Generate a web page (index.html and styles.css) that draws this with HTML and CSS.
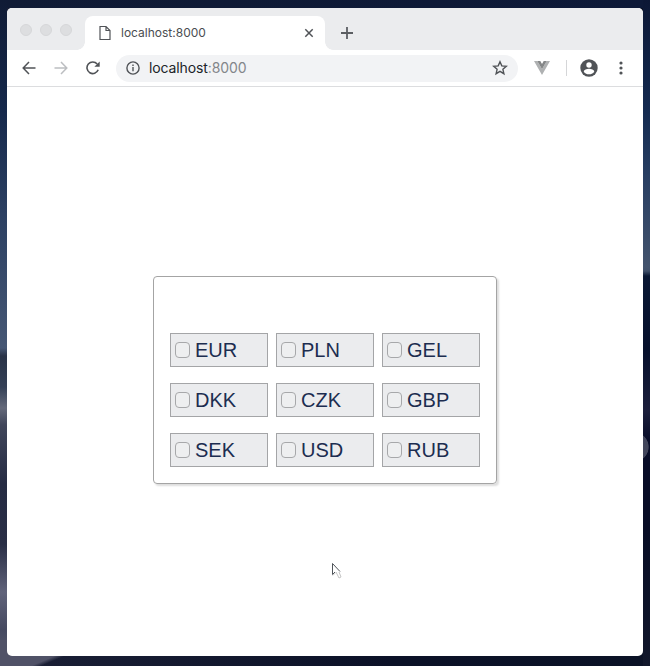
FILE: index.html
```html
<!DOCTYPE html>
<html lang="en">
<head>
<meta charset="utf-8">
<title>localhost:8000</title>
<link rel="stylesheet" href="styles.css">
</head>
<body>
<div class="window">
  <header class="tabstrip">
    <div class="lights"><i></i><i></i><i></i></div>
    <div class="tab">
      <svg class="file" width="12" height="16" viewBox="0 0 12 16" fill="none" stroke="#505357" stroke-width="1.2"><path d="M1 1.500h6l4 4v9H1zM7 1.500v4h4"/></svg>
      <span class="tab-title">localhost:8000</span>
      <svg class="close" width="10" height="10" viewBox="0 0 10 10" stroke="#505357" stroke-width="1.5"><path d="M1.300 1.300l7.400 7.400M8.700 1.300L1.300 8.700"/></svg>
    </div>
    <svg class="plus" width="14" height="14" viewBox="0 0 14 14" stroke="#5b5e62" stroke-width="1.8"><path d="M7 1v12M1 7h12"/></svg>
  </header>
  <nav class="toolbar">
    <svg class="back" width="14" height="14" viewBox="0 0 14 14" fill="none" stroke="#505357" stroke-width="1.5"><path d="M13.500 7H1.500M7 1L1.200 7 7 13"/></svg>
    <svg class="forward" width="14" height="14" viewBox="0 0 14 14" fill="none" stroke="#bcbec1" stroke-width="1.5"><path d="M.5 7h12M7 1l5.800 6L7 13"/></svg>
    <svg class="reload" width="14" height="14" viewBox="0 0 14 14"><path d="M12.200 8.800A5.800 5.800 0 1 1 11.200 3" fill="none" stroke="#505357" stroke-width="1.6"/><path d="M13.700.5v5.300H8.400z" fill="#505357"/></svg>
    <div class="address">
      <svg width="14" height="14" viewBox="0 0 14 14"><circle cx="7" cy="7" r="6.1" fill="none" stroke="#505357" stroke-width="1.4"/><path d="M6.300 6h1.400v4.300H6.300zM6.300 3.500h1.400v1.400H6.300z" fill="#505357"/></svg>
      <span class="url">localhost<span class="port">:8000</span></span>
      <svg class="star" width="16" height="16" viewBox="0 0 16 16" fill="none" stroke="#505357" stroke-width="1.4"><path d="M8 1.800l1.800 4.100 4.500.4-3.400 3 1 4.400L8 11.400l-3.900 2.300 1-4.400-3.400-3 4.500-.4z"/></svg>
    </div>
    <svg class="vue" width="16" height="14" viewBox="0 0 16 14"><path d="M0 0h3.300L8 8.200 12.700 0H16L8 14z" fill="#afb1b2"/><path d="M3.300 0h3L8 3l1.700-3h3L8 8.200z" fill="#858788"/></svg>
    <i class="divider"></i>
    <svg class="profile" width="18" height="18" viewBox="0 0 18 18"><circle cx="9" cy="9" r="8.700" fill="#505357"/><circle cx="9" cy="6" r="2.700" fill="#fff"/><path d="M3.700 12.200c.8-3.400 9.800-3.400 10.600 0C12.900 16.400 5.100 16.400 3.700 12.200z" fill="#fff"/></svg>
    <svg class="menu" width="4" height="14" viewBox="0 0 4 14" fill="#505357"><circle cx="2" cy="2" r="1.600"/><circle cx="2" cy="7" r="1.600"/><circle cx="2" cy="12" r="1.600"/></svg>
  </nav>
  <main class="page">
    <div class="card">
      <label class="currency"><input type="checkbox">EUR</label>
      <label class="currency"><input type="checkbox">PLN</label>
      <label class="currency"><input type="checkbox">GEL</label>
      <label class="currency"><input type="checkbox">DKK</label>
      <label class="currency"><input type="checkbox">CZK</label>
      <label class="currency"><input type="checkbox">GBP</label>
      <label class="currency"><input type="checkbox">SEK</label>
      <label class="currency"><input type="checkbox">USD</label>
      <label class="currency"><input type="checkbox">RUB</label>
    </div>
  </main>
</div>
<svg class="cursor" width="12" height="18" viewBox="0 0 12 18"><path d="M5 10l3 6 2-1-2-5" fill="#fff" stroke="#c4c4c4"/><path d="M1.500 1.500v11l2.500-2.500h4.500z" fill="#fff"/><path d="M4 10l-2.500 2.500v-11L9 9.500" fill="none" stroke="#50555b"/><path d="M1.500 13.500L4.500 11" stroke="#d0d0d0"/></svg>
</body>
</html>
```
FILE: styles.css
```css
* { box-sizing: border-box; }

body {
  margin: 0;
  height: 666px;
  padding: 8px 7px 10px;
  overflow: hidden;
  font-family: "Liberation Sans", Arial, sans-serif;
  background:
    radial-gradient(circle 15px at 634px 447px, #42465c 95%, transparent),
    linear-gradient(157deg, #505267 36px, transparent 40px) 0 100% / 75px 26px no-repeat,
    linear-gradient(#101b35, #15284b 110px, #2d4163 219px, #465774 348px, #293347 356px, #344056 387px, #64697a 408px, #40465a 425px, #252b43 484px, #292e45 544px, #60637a 592px, #454960 630px, #55576b 656px) 0 0 / 7px 656px no-repeat,
    linear-gradient(#0c1735, #142a50 110px, #283e62 176px, #43536d 267px, #40506a 271px, #0a1834 276px, #06102c 349px, #1c1f3c 410px, #080d29 440px, #080d25 530px, #11172b 666px) 100% 0 / 7px 100% no-repeat,
    linear-gradient(90deg, #101b35, #0d1938) 0 0 / 100% 8px no-repeat,
    linear-gradient(90deg, #1b2036, #0b1127 60%, #0b1226);
}

.window {
  height: 648px;
  display: flex;
  flex-direction: column;
  overflow: hidden;
  border-radius: 5px;
  background: #fff;
}

.tabstrip {
  height: 42px;
  flex: none;
  display: flex;
  align-items: center;
  background: #ebecee;
}

.lights {
  display: flex;
  gap: 8px;
  width: 78px;
  padding: 2px 0 0 13px;
}

.lights i {
  width: 12px;
  height: 12px;
  border: 1px solid #d6d7d9;
  border-radius: 50%;
  background: #dddee0;
}

.tab {
  position: relative;
  align-self: flex-end;
  width: 240px;
  height: 34px;
  padding: 0 11px 0 14px;
  display: flex;
  align-items: center;
  border-radius: 8px 8px 0 0;
  background: #fff;
}

.tab::before,
.tab::after {
  content: "";
  position: absolute;
  bottom: 0;
  width: 8px;
  height: 8px;
}

.tab::before {
  left: -8px;
  background: radial-gradient(circle at 0 0, transparent 7.5px, #fff 8px);
}

.tab::after {
  right: -8px;
  background: radial-gradient(circle at 100% 0, transparent 7.5px, #fff 8px);
}

.tab-title {
  margin-left: 10px;
  font: 12px/16px Inter, sans-serif;
  color: #4a4d51;
}

.close { margin-left: auto; }

.plus { margin: 8px 0 0 15px; }

.toolbar {
  height: 37px;
  flex: none;
  display: flex;
  align-items: center;
  padding-left: 15px;
  border-bottom: 1px solid #dcdddf;
}

.forward,
.reload { margin-left: 18px; }

.address {
  width: 402px;
  height: 27px;
  margin-left: 16px;
  padding: 0 10px;
  display: flex;
  align-items: center;
  border-radius: 14px;
  background: #f2f3f5;
}

.url {
  margin-left: 9px;
  font: 14px/18px Inter, sans-serif;
  letter-spacing: -0.12px;
  color: #202328;
}

.port { color: #83868a; }

.star { margin-left: auto; }

.vue { margin-left: 16px; }

.divider {
  width: 1px;
  height: 16px;
  margin-left: 16px;
  background: #d5d6d8;
}

.profile { margin-left: 13px; }

.menu { margin-left: 21px; }

.page {
  flex: 1;
  display: flex;
  justify-content: center;
  align-items: flex-start;
  padding-top: 189px;
}

.card {
  width: 344px;
  height: 208px;
  padding: 56px 16px 16px;
  display: grid;
  grid-template-columns: repeat(3, 98px);
  grid-auto-rows: 34px;
  gap: 16px 8px;
  border: 1px solid #a4a4a4;
  border-radius: 4px;
  box-shadow: 2px 2px 2px #dedede;
}

.currency {
  display: flex;
  align-items: center;
  padding-left: 4px;
  border: 1px solid #a4a5a7;
  background: #ebecee;
  color: #1c2d50;
  font-size: 20px;
}

.currency input {
  appearance: none;
  width: 15px;
  height: 16px;
  margin: 0 5px 0 0;
  border: 1px solid #a7a8aa;
  border-radius: 4px;
  background: #eeeff0;
}

.cursor {
  position: absolute;
  left: 331px;
  top: 562px;
}
```
